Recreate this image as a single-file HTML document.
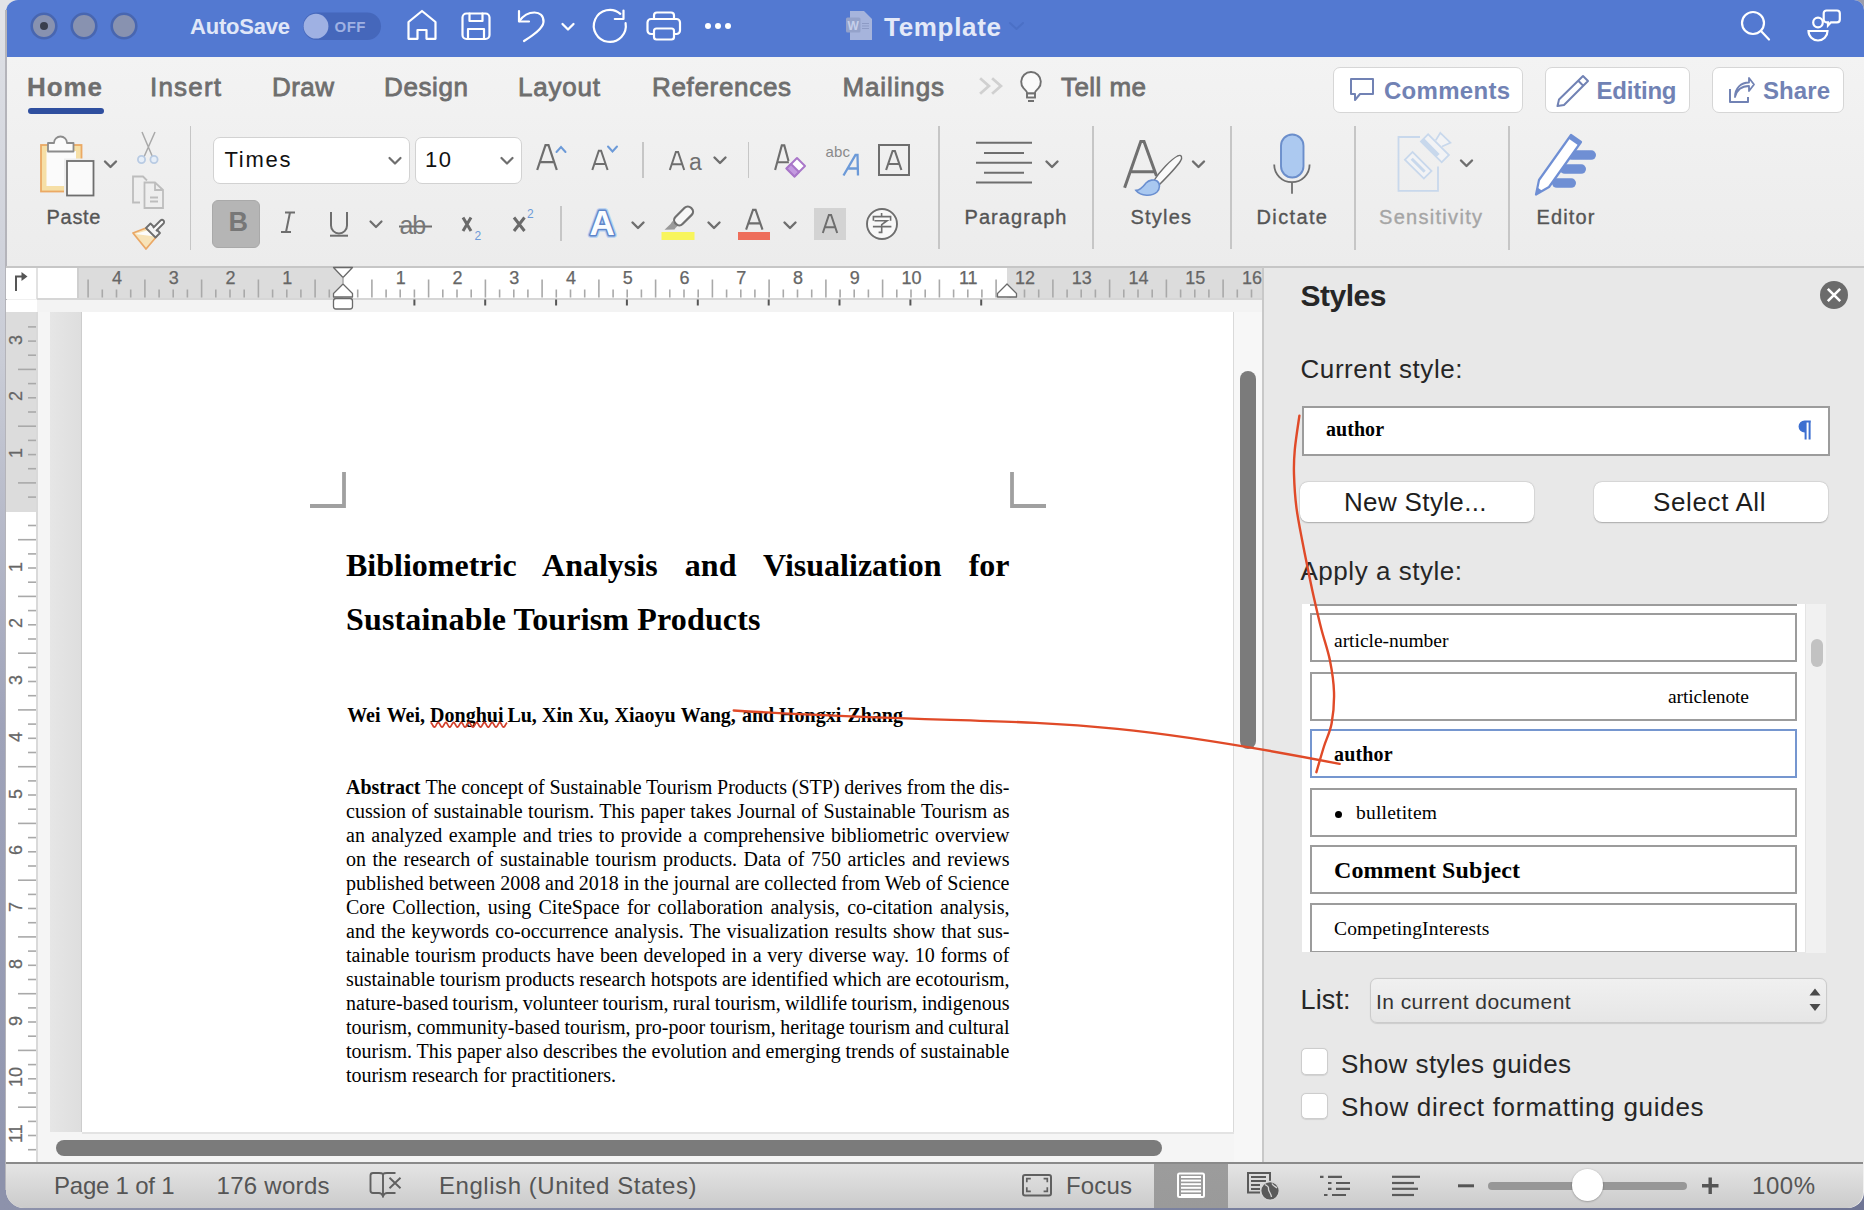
<!DOCTYPE html>
<html><head><meta charset="utf-8">
<style>
*{margin:0;padding:0;box-sizing:border-box}
html,body{width:1864px;height:1210px;overflow:hidden;background:#8f94ab;font-family:"Liberation Sans",sans-serif;position:relative}
.a{position:absolute}
.t{position:absolute;white-space:nowrap;line-height:1}
svg{overflow:visible}
</style></head><body>
<div class="a" style="left:0;top:0;width:6px;height:1210px;background:linear-gradient(#dfe1e6,#c9ccd6 30%,#9fa3b9 60%,#9095ae)"></div>
<div class="a" style="left:0;top:1150px;width:1864px;height:60px;background:linear-gradient(90deg,#8d92ab,#7f86a3 50%,#6f7594)"></div>
<div class="a" style="left:0;top:0;width:30px;height:30px;background:#e2e3e7"></div>
<div class="a" style="left:1834px;top:0;width:30px;height:30px;background:#9a9cab"></div>
<div id="win" class="a" style="left:6px;top:0;width:1858px;height:1208px;border-radius:12px 10px 16px 18px;overflow:hidden;background:#f0f0f0">
<div class="a" style="left:0;top:0;width:1858px;height:57px;background:#5379d1"></div>
<div class="a" style="left:0;top:57px;width:1858px;height:210px;background:linear-gradient(#f3f3f3,#f0f0f0 40%,#ececec)"></div>
</div>
<div class="a" style="left:5px;top:10px;width:1.5px;height:1180px;background:#b4b4ba"></div>
<svg class="a" style="left:0;top:0" width="1864" height="57">
   <g stroke="#4866b0" stroke-width="2.6" fill="#8892b0">
    <circle cx="44" cy="26" r="12.3"/><circle cx="84" cy="26" r="12.3"/><circle cx="124" cy="26" r="12.3"/>
   </g>
   <circle cx="44" cy="26" r="4" fill="#3a3f4e"/>
   <rect x="303" y="12.5" width="78" height="27.5" rx="13.7" fill="#4567bb"/>
   <circle cx="316" cy="26.2" r="12.4" fill="#9fb1e3"/>
   <g fill="none" stroke="#fff" stroke-width="2.2" stroke-linejoin="round" stroke-linecap="round">
    <path d="M408.5 22 L422 11 L435.5 22 V38.8 H426.5 V30 H417.5 V38.8 H408.5 Z"/>
    <rect x="462.5" y="13.5" width="27" height="25.5" rx="4"/>
    <path d="M469.5 13.5 V21 H482.5 V13.5"/><path d="M468 39 V29 H484 V39"/>
    <path d="M519 11 V21.5 H529"/><path d="M519.5 21 C527 10 544 9 543.5 22 C543 29 532 36 524 41"/>
    <path d="M562.5 24 L568 29.5 L573.5 24" stroke-width="2.3"/>
    <path d="M620.3 13.8 A16 16 0 1 0 625.6 23.2"/><path d="M623.5 10.5 V19 H614.8"/>
    <path d="M654 19 V15.5 A3 3 0 0 1 657 12.5 H671 A3 3 0 0 1 674 15.5 V19"/>
    <path d="M653.5 34 H651 A3.5 3.5 0 0 1 647.5 30.5 V22.5 A3.5 3.5 0 0 1 651 19 H676.5 A3.5 3.5 0 0 1 680 22.5 V30.5 A3.5 3.5 0 0 1 676.5 34 H674"/>
    <rect x="654" y="28.5" width="20" height="11" rx="2.5"/>
    <path d="M1010 23 L1016.5 29 L1023 23" stroke="#4b70c6" stroke-width="2"/>
   </g>
   <g fill="#fff"><circle cx="708" cy="26" r="3"/><circle cx="718" cy="26" r="3"/><circle cx="728" cy="26" r="3"/></g>
   <path d="M850 11 H864 L872 19 V40 H850 Z" fill="#a6b4dc"/>
   <rect x="846" y="17.5" width="14.5" height="15" rx="1.5" fill="#94a2ca"/>
   <text x="847.5" y="30" font-family="Liberation Sans" font-size="12" font-weight="bold" fill="#c5cfea">W</text>
   <g stroke="#8d9bc5" stroke-width="1"><path d="M862 23.5 H869 M862 26 H869 M862 28.5 H869"/></g>
   <g fill="none" stroke="#fff" stroke-width="2.2" stroke-linecap="round">
    <circle cx="1753" cy="23" r="11"/><path d="M1761 31 L1769 39.5"/>
    <circle cx="1818" cy="22.5" r="4.8"/>
    <path d="M1808.5 31 H1827.5 A9.5 9.5 0 0 1 1808.5 31 Z"/>
    <path d="M1826.5 10.5 H1837 A2.8 2.8 0 0 1 1839.8 13.3 V19.5 A2.8 2.8 0 0 1 1837 22.3 H1831 L1828 25.5 V22.3 H1826.5 A2.8 2.8 0 0 1 1823.7 19.5 V13.3 A2.8 2.8 0 0 1 1826.5 10.5 Z"/>
   </g>
  </svg>
<div class="t" style="left:190.0px;top:15.6px;font-size:22px;color:#e0e7f8;font-weight:bold;letter-spacing:-0.210px;">AutoSave</div>
<div class="t" style="left:334.5px;top:18.5px;font-size:15px;color:#9fb1e3;font-weight:bold;letter-spacing:0.508px;">OFF</div>
<div class="t" style="left:884.0px;top:14.0px;font-size:26px;color:#e4e9f8;font-weight:bold;letter-spacing:0.688px;">Template</div>
<div class="t" style="left:27.0px;top:74.3px;font-size:26px;color:#6e6e6e;font-weight:bold;letter-spacing:0.922px;-webkit-text-stroke:0.3px #6e6e6e;">Home</div>
<div class="t" style="left:150.0px;top:74.3px;font-size:26px;color:#6e6e6e;letter-spacing:1.200px;-webkit-text-stroke:0.8px #6e6e6e;">Insert</div>
<div class="t" style="left:272.0px;top:74.3px;font-size:26px;color:#6e6e6e;letter-spacing:0.443px;-webkit-text-stroke:0.8px #6e6e6e;">Draw</div>
<div class="t" style="left:384.0px;top:74.3px;font-size:26px;color:#6e6e6e;letter-spacing:0.616px;-webkit-text-stroke:0.8px #6e6e6e;">Design</div>
<div class="t" style="left:518.0px;top:74.3px;font-size:26px;color:#6e6e6e;letter-spacing:0.794px;-webkit-text-stroke:0.8px #6e6e6e;">Layout</div>
<div class="t" style="left:652.0px;top:74.3px;font-size:26px;color:#6e6e6e;letter-spacing:0.675px;-webkit-text-stroke:0.8px #6e6e6e;">References</div>
<div class="t" style="left:842.5px;top:74.3px;font-size:26px;color:#6e6e6e;letter-spacing:0.877px;-webkit-text-stroke:0.8px #6e6e6e;">Mailings</div>
<div class="t" style="left:1061.0px;top:74.3px;font-size:26px;color:#6e6e6e;letter-spacing:0.443px;-webkit-text-stroke:0.8px #6e6e6e;">Tell me</div>
<div class="a" style="left:28px;top:108px;width:76px;height:6px;background:#2f4f9f;border-radius:3px"></div>
<svg class="a" style="left:970px;top:70px" width="80" height="40">
   <g fill="none" stroke="#d0d0d0" stroke-width="2.8" stroke-linejoin="miter"><path d="M10.1 8.3 L18.9 16 L10.1 23.8 M22.1 8.3 L30.9 16 L22.1 23.8"/></g>
   <g stroke="#707070" stroke-width="1.9"><path d="M57.3 23.5 C57.2 21.5 55.6 20.2 53.7 18.4 A9.8 9.8 0 1 1 68.3 18.4 C66.4 20.2 64.8 21.5 64.7 23.5 Z" fill="#fafafa"/><rect x="57" y="23.5" width="8" height="4" fill="#fafafa"/><path d="M58 31 H64" stroke-width="2"/></g>
  </svg>
<div class="a" style="left:1333px;top:67px;width:190px;height:46px;background:#fff;border:1.5px solid #d6d6d6;border-radius:7px"></div>
<div class="a" style="left:1545px;top:67px;width:145px;height:46px;background:#fff;border:1.5px solid #d6d6d6;border-radius:7px"></div>
<div class="a" style="left:1712px;top:67px;width:131.5px;height:46px;background:#fff;border:1.5px solid #d6d6d6;border-radius:7px"></div>
<div class="t" style="left:1384.0px;top:79.1px;font-size:24px;color:#7182b4;font-weight:bold;letter-spacing:0.283px;">Comments</div>
<div class="t" style="left:1596.5px;top:79.1px;font-size:24px;color:#7182b4;font-weight:bold;letter-spacing:-0.221px;">Editing</div>
<div class="t" style="left:1763.0px;top:79.1px;font-size:24px;color:#7182b4;font-weight:bold;letter-spacing:0.074px;">Share</div>
<svg class="a" style="left:0;top:60px" width="1864" height="60">
   <g fill="none" stroke="#7182b4" stroke-width="2" stroke-linejoin="round">
    <path d="M1351 19 H1373 V34 H1360 L1355 40 V34 H1351 Z"/>
    <path d="M1583 16 L1588 21 L1564 45 L1557.5 46 L1559 39.5 Z M1578.5 21 L1583.5 26"/>
    <path d="M1730 29 V42 H1748 V37"/>
    <path d="M1735 37 C1737 29 1742 26 1749 26 V31 L1754 24.5 L1749 18 V22.5 C1741 22.5 1735 28 1735 37 Z" stroke-width="1.8"/>
   </g>
  </svg>
<div class="a" style="left:189.75px;top:126px;width:1.5px;height:124px;background:#c6c6c6;"></div>
<div class="a" style="left:938.25px;top:126px;width:1.5px;height:123px;background:#c6c6c6;"></div>
<div class="a" style="left:1092.25px;top:126px;width:1.5px;height:123px;background:#c6c6c6;"></div>
<div class="a" style="left:1230.25px;top:126px;width:1.5px;height:123px;background:#c6c6c6;"></div>
<div class="a" style="left:1354.25px;top:126px;width:1.5px;height:123.5px;background:#c6c6c6;"></div>
<div class="a" style="left:1508.25px;top:126px;width:1.5px;height:123.5px;background:#c6c6c6;"></div>
<div class="a" style="left:642.05px;top:142px;width:1.5px;height:36px;background:#c6c6c6;"></div>
<div class="a" style="left:747.95px;top:142px;width:1.5px;height:36px;background:#c6c6c6;"></div>
<div class="a" style="left:560.25px;top:206px;width:1.5px;height:35px;background:#c6c6c6;"></div>
<div class="a" style="left:212.5px;top:136.5px;width:197px;height:47px;background:#fff;border:1px solid #d2d2d2;border-radius:7px"></div>
<div class="a" style="left:414.5px;top:136.5px;width:107px;height:47px;background:#fff;border:1px solid #d2d2d2;border-radius:7px"></div>
<div class="t" style="left:224.5px;top:148.9px;font-size:22px;color:#111;letter-spacing:1.730px;">Times</div>
<div class="t" style="left:425.0px;top:148.9px;font-size:22px;color:#111;letter-spacing:1.531px;">10</div>
<div class="a" style="left:212px;top:200px;width:48px;height:48px;background:#b5b5b5;border:1px solid #a9a9a9;border-radius:6px"></div>
<div class="t" style="left:228.5px;top:209.1px;font-size:27px;color:#777;font-weight:bold;letter-spacing:-3.500px;">B</div>
<div class="t" style="left:46.5px;top:206.9px;font-size:20px;color:#555;letter-spacing:0.711px;-webkit-text-stroke:0.35px #555;">Paste</div>
<div class="t" style="left:964.5px;top:207.1px;font-size:20px;color:#555;letter-spacing:1.074px;-webkit-text-stroke:0.35px #555;">Paragraph</div>
<div class="t" style="left:1130.5px;top:207.1px;font-size:20px;color:#555;letter-spacing:1.206px;-webkit-text-stroke:0.35px #555;">Styles</div>
<div class="t" style="left:1256.5px;top:206.8px;font-size:20px;color:#555;letter-spacing:1.375px;-webkit-text-stroke:0.35px #555;">Dictate</div>
<div class="t" style="left:1379.0px;top:206.8px;font-size:20px;color:#a5a5a5;letter-spacing:1.297px;-webkit-text-stroke:0.35px #a5a5a5;">Sensitivity</div>
<div class="t" style="left:1536.5px;top:206.8px;font-size:20px;color:#555;letter-spacing:1.150px;-webkit-text-stroke:0.35px #555;">Editor</div>
<svg class="a" style="left:0;top:0" width="1864" height="270">
<rect x="41" y="145" width="40.5" height="46.5" fill="#f6dfa6" stroke="#eba964" stroke-width="1.8"/>
<rect x="46.5" y="151" width="29.5" height="35" fill="#fbfbfb"/>
<path d="M48 151.5 V143 H54 A6.5 6.5 0 0 1 67 143 H73.5 V151.5 Z" fill="#fbfbfb" stroke="#8c8c8c" stroke-width="1.8" stroke-linejoin="round"/>
<rect x="65" y="159.5" width="29" height="37" fill="#fff" stroke="#eeeeee" stroke-width="2"/>
<rect x="67" y="161" width="26.5" height="34.5" fill="#fafafa" stroke="#6e6e6e" stroke-width="1.8"/>
<path d="M105 161.5 L110.5 167.0 L116 161.5" fill="none" stroke="#6e6e6e" stroke-width="2.4" stroke-linecap="round" stroke-linejoin="round"/><g fill="none" stroke="#a9a9a9" stroke-width="1.5"><path d="M142 132 L153 158 M155 132 L143.5 158"/></g>
<g fill="#e6eef8" stroke="#b9cbe3" stroke-width="1.8"><circle cx="141.5" cy="159.5" r="3.6"/><circle cx="154" cy="159.5" r="3.6"/></g>
<g fill="none" stroke="#bdbdbd" stroke-width="1.8" stroke-linejoin="miter">
<path d="M140 202.5 H133 V176.5 H143 L147 180.5"/>
<path d="M144.5 182.5 H155 L163 190 V208 H144.5 Z M155 182.5 V190 H163"/>
<path d="M150 197.5 H158 M150 201.5 H158"/></g>
<path d="M133 233 L146 228 L157 236 L146 249 Z" fill="#f7e3b8" stroke="#eaa866" stroke-width="1.8" stroke-linejoin="round"/>
<path d="M135 234 L147 230.5 L155.5 236.5" fill="#fcfcfc" stroke="none"/>
<path d="M146 228 L150.5 223.5 L160 233 L155.5 237.5 Z" fill="#f4f4f4" stroke="#6e6e6e" stroke-width="1.8" stroke-linejoin="round"/>
<path d="M153 228 L160.5 220.5 A2 2 0 0 1 163.5 223.5 L156 231" fill="#fafafa" stroke="#6e6e6e" stroke-width="1.8"/>
<path d="M389.5 158 L395.0 163.5 L400.5 158" fill="none" stroke="#6e6e6e" stroke-width="2.2" stroke-linecap="round" stroke-linejoin="round"/><path d="M501.5 158 L507.0 163.5 L512.5 158" fill="none" stroke="#6e6e6e" stroke-width="2.2" stroke-linecap="round" stroke-linejoin="round"/><g fill="none" stroke="#6e6e6e" stroke-width="2">
<path d="M285 212.5 H295 M281 232 H291 M290 212.5 L286 232"/>
<path d="M331 212 V225.5 A8 8 0 0 0 347 225.5 V212" />
<path d="M330 235.7 H348"/>
<path d="M399 226.5 H432"/>
</g>
<path d="M370.5 221.5 L376.0 227.0 L381.5 221.5" fill="none" stroke="#6e6e6e" stroke-width="2.2" stroke-linecap="round" stroke-linejoin="round"/><path d="M463 217.5 L471 231 M471 217.5 L463 231 M514 217.5 L524.5 231 M524.5 217.5 L514 231" stroke="#6a6a6a" stroke-width="3" fill="none"/></svg>
<div class="t" style="left:399.5px;top:212.8px;font-size:25px;color:#777;letter-spacing:-1.2px">ab</div>
<div class="t" style="left:474.5px;top:229.8px;font-size:12px;color:#6c9ad8;letter-spacing:0.328px;">2</div>
<div class="t" style="left:527.0px;top:208.4px;font-size:12px;color:#6c9ad8;letter-spacing:0.328px;">2</div>
<div class="t" style="left:689.0px;top:150.5px;font-size:23px;color:#707070;letter-spacing:-1.797px;">a</div>
<div class="t" style="left:825.5px;top:143.8px;font-size:15px;color:#8a8a8a;letter-spacing:0.156px;">abc</div>
<div class="a" style="left:877.5px;top:144px;width:32.5px;height:31.5px;background:transparent;border:2px solid #6e6e6e"></div>
<svg class="a" style="left:0;top:0" width="1864" height="270">
<path d="M556.5 152 L561 147 L565.5 152" fill="none" stroke="#6c9ad8" stroke-width="2" stroke-linecap="round"/>
<path d="M608 146.5 L612.5 151.5 L617 146.5" fill="none" stroke="#6c9ad8" stroke-width="2" stroke-linecap="round"/>
<path d="M714.5 157.5 L720.0 163.0 L725.5 157.5" fill="none" stroke="#6e6e6e" stroke-width="2.4" stroke-linecap="round" stroke-linejoin="round"/><path d="M786.5 168.5 L797 158 L805 166 L794.5 176.5 Z" fill="#fff" stroke="#a977c9" stroke-width="2" stroke-linejoin="round"/><path d="M786.5 168.5 L791 164 L799 172 L794.5 176.5 Z" fill="#c49be0" stroke="#a977c9" stroke-width="2" stroke-linejoin="round"/>
<path d="M843.5 175.5 L855.5 155 H857.5 L858 175.5 M847.5 168.5 H857.5" fill="none" stroke="#6c9ad8" stroke-width="2.3"/>
<path d="M632.5 222.5 L638.0 228.0 L643.5 222.5" fill="none" stroke="#6e6e6e" stroke-width="2.4" stroke-linecap="round" stroke-linejoin="round"/><path d="M708.5 222.5 L714.0 228.0 L719.5 222.5" fill="none" stroke="#6e6e6e" stroke-width="2.4" stroke-linecap="round" stroke-linejoin="round"/><path d="M784.5 222.5 L790.0 228.0 L795.5 222.5" fill="none" stroke="#6e6e6e" stroke-width="2.4" stroke-linecap="round" stroke-linejoin="round"/><rect x="661.5" y="232" width="33" height="8" fill="#f8f55c"/>
<path d="M664.5 229.8 L670.5 224 L672.5 221 L677.5 226 L675.5 228 L674.5 229.5 Z" fill="#9a9a9a"/><g transform="rotate(45 682.5 217)"><rect x="677.5" y="204.5" width="10" height="22" rx="4.5" fill="#f7f7f7" stroke="#707070" stroke-width="2.2"/></g>
<rect x="738" y="232" width="32" height="8" fill="#ee6e5b"/>
<rect x="814" y="208" width="32" height="32" fill="#d3d3d3"/>
<circle cx="882" cy="224" r="15" fill="#f8f8f8" stroke="#6e6e6e" stroke-width="1.9"/><path d="M881.6 213 V216.4 M873.4 220.8 V216.6 H890.6 V220.8 M874.5 220.7 H887.1 L881.7 224.7 V232.4 H878.6 M872.9 226.6 H891.4" fill="none" stroke="#6e6e6e" stroke-width="1.6"/>
<path d="M537.2 170.0 L545.5 145.1 H548.5 L556.8 170.0 M539.8 162.2 H554.2" fill="none" stroke="#6e6e6e" stroke-width="2.2" stroke-linejoin="miter"/><path d="M592.3 170.0 L598.8 150.8 H601.1 L607.6 170.0 M594.3 163.9 H605.6" fill="none" stroke="#6e6e6e" stroke-width="2.0" stroke-linejoin="miter"/><path d="M669.8 170.0 L675.9 152.0 H678.1 L684.2 170.0 M671.7 164.3 H682.3" fill="none" stroke="#6e6e6e" stroke-width="2.0" stroke-linejoin="miter"/><path d="M775.1 170.0 L781.8 145.4 H784.3 L788.5 161.0 M777.2 162.3 H788.9" fill="none" stroke="#6e6e6e" stroke-width="2.1" stroke-linejoin="miter"/><path d="M886.1 170.0 L892.6 151.0 H894.9 L901.4 170.0 M888.2 164.0 H899.3" fill="none" stroke="#6e6e6e" stroke-width="2.1" stroke-linejoin="miter"/><path d="M746.1 229.7 L753.0 209.9 H755.6 L762.5 229.7 M748.3 223.4 H760.3" fill="none" stroke="#6e6e6e" stroke-width="2.1" stroke-linejoin="miter"/><path d="M822.8 233.0 L828.9 215.0 H831.1 L837.2 233.0 M824.7 227.3 H835.3" fill="none" stroke="#6e6e6e" stroke-width="2.0" stroke-linejoin="miter"/></svg>
<svg class="a" style="left:0;top:0" width="1864" height="270"><g font-family="Liberation Sans" font-weight="bold" font-size="35" stroke-linejoin="round"><text x="589.5" y="235" fill="#fff" stroke="#b4cff1" stroke-width="5.5">A</text><text x="589.5" y="235" fill="#fff" stroke="#5f86c9" stroke-width="3">A</text><text x="589.5" y="235" fill="#fbfdff" stroke="none">A</text></g></svg>
<svg class="a" style="left:0;top:0" width="1864" height="270">
<path d="M976 142.7 H1032" stroke="#6e6e6e" stroke-width="2"/><path d="M984 152.9 H1024" stroke="#6e6e6e" stroke-width="2"/><path d="M976 162.8 H1032" stroke="#6e6e6e" stroke-width="2"/><path d="M984 172.8 H1024" stroke="#6e6e6e" stroke-width="2"/><path d="M976 182.6 H1032" stroke="#6e6e6e" stroke-width="2"/><path d="M1046.5 161.5 L1052.0 167.0 L1057.5 161.5" fill="none" stroke="#6e6e6e" stroke-width="2.4" stroke-linecap="round" stroke-linejoin="round"/><path d="M1193 161.5 L1198.5 167.0 L1204 161.5" fill="none" stroke="#6e6e6e" stroke-width="2.4" stroke-linecap="round" stroke-linejoin="round"/><path d="M1461 160.5 L1466.5 166.0 L1472 160.5" fill="none" stroke="#6e6e6e" stroke-width="2.4" stroke-linecap="round" stroke-linejoin="round"/><path d="M1124.6 187.8 L1140.8 141.5 H1144 L1156.5 176 M1131.5 171.8 H1155.5" fill="none" stroke="#707070" stroke-width="3"/>
<path d="M1154 180.5 C1160 171 1171 159.5 1177.5 156 C1182 154 1182.5 157.5 1180.5 161 C1176 168 1166 178 1159.5 184.5 Z" fill="#fafafa" stroke="#6e6e6e" stroke-width="1.4"/>
<path d="M1136 190.4 C1141 190 1143.5 186 1146 183 C1149 180 1154 179 1157 181 C1160.5 183.5 1160 189 1157 192 C1152 196.5 1141 196.5 1136 190.4 Z" fill="#a9c8f0" stroke="#6a8fd0" stroke-width="1.6"/>
<rect x="1281" y="134.5" width="22.5" height="43" rx="11.25" fill="#acc9f0" stroke="#6b8ecb" stroke-width="1.9"/>
<path d="M1274.2 164.5 A17.7 17.7 0 0 0 1309.6 164.5 M1292 182.2 V193.8" fill="none" stroke="#6e6e6e" stroke-width="1.8"/>
<path d="M1420 137 H1398.5 V190.8 H1438 V166.5" fill="none" stroke="#c8d8ec" stroke-width="1.8"/>
<g transform="translate(1418.2 165.3) rotate(45)"><rect x="-13.4" y="-5.4" width="26.8" height="10.8" fill="#f2f3f5" stroke="#c8d8ec" stroke-width="1.8"/><rect x="-9.2" y="-1.5" width="18.4" height="3" fill="#c8d8ec"/></g>
<path d="M1435.7 140.4 L1440.3 132.9 L1450.4 142.7 L1442 146.5" fill="#f2f3f5" stroke="#c8d8ec" stroke-width="1.8" stroke-linejoin="miter"/>
<g transform="translate(1434.9 148.3) rotate(45)"><rect x="-14.7" y="-5.1" width="29.4" height="10.2" fill="#f2f3f5" stroke="#c8d8ec" stroke-width="1.8"/><rect x="-14.7" y="0.6" width="22" height="4.5" fill="#c8d8ec"/></g>
<g fill="#6f8fd4"><rect x="1567" y="150.3" width="29" height="9.5" rx="4.75"/><rect x="1560" y="164.3" width="26" height="9.5" rx="4.75"/><rect x="1552" y="178.3" width="24" height="9.5" rx="4.75"/></g>
<path d="M1536 194.5 L1539 180 L1571 135 L1581 142 L1549 187 Z" fill="#fff" stroke="#6f8fd4" stroke-width="2.2" stroke-linejoin="round"/>
<path d="M1568.5 138.5 L1571 135 L1581 142 L1578.5 145.5 Z" fill="#6f8fd4"/><path d="M1536 194.5 L1537.5 187.5 L1542.5 191 Z" fill="#6f8fd4"/>
</svg>
<div class="a" style="left:6px;top:266px;width:1858px;height:1.5px;background:#c6c6c6;"></div>
<div class="a" style="left:6px;top:267.5px;width:1257px;height:31.5px;background:#ffffff;"></div>
<div class="a" style="left:36px;top:267.5px;width:1.5px;height:31.5px;background:#e2e2e2;"></div>
<div class="a" style="left:77px;top:267.5px;width:266px;height:30px;background:#dcdcdc;"></div>
<div class="a" style="left:1007px;top:267.5px;width:255.5px;height:30px;background:#dcdcdc;"></div>
<div class="a" style="left:77px;top:267.5px;width:1.5px;height:30px;background:#cfcfcf;"></div>
<div class="a" style="left:37px;top:297.5px;width:1226px;height:2px;background:#d6d6d6;"></div>
<div class="a" style="left:6px;top:299.5px;width:31px;height:12.5px;background:#ffffff;"></div>
<div class="a" style="left:37px;top:299.5px;width:1226px;height:12.5px;background:#f3f3f3;"></div>
<div class="a" style="left:6px;top:312px;width:30px;height:850px;background:#ffffff;"></div>
<div class="a" style="left:6px;top:312px;width:30px;height:199.5px;background:#dcdcdc;"></div>
<div class="a" style="left:36px;top:312px;width:1.5px;height:850px;background:#d9d9d9;"></div>
<div class="a" style="left:37.5px;top:312px;width:1225.5px;height:850px;background:#f5f5f5;"></div>
<div class="a" style="left:50px;top:312px;width:31px;height:820px;background:linear-gradient(90deg,#e6e6e6,#dedede)"></div>
<div class="a" style="left:81px;top:312px;width:1.5px;height:820px;background:#cdcdcd;"></div>
<div class="a" style="left:82px;top:312px;width:1150.5px;height:820px;background:#ffffff;"></div>
<div class="a" style="left:1232.5px;top:312px;width:1.5px;height:821.5px;background:#dadada;"></div>
<div class="a" style="left:82px;top:1132px;width:1152px;height:1.5px;background:#e3e3e3;"></div>
<div class="a" style="left:1234px;top:312px;width:28.5px;height:850px;background:#f7f7f7;"></div>
<div class="a" style="left:1262px;top:267px;width:2px;height:895px;background:#c8c8c8;"></div>
<div class="a" style="left:1240px;top:371px;width:16px;height:378px;background:#7b7b7b;border-radius:8px"></div>
<div class="a" style="left:56px;top:1140px;width:1106px;height:16px;background:#7b7b7b;border-radius:8px"></div>
<svg class="a" style="left:0;top:0" width="1864" height="1210">
<g stroke="#a9a9a9" stroke-width="1.6"><path d="M88.1 279.5 V297.5"/><path d="M102.3 289.5 V297.5"/><path d="M116.5 289.5 V297.5"/><path d="M130.7 289.5 V297.5"/><path d="M144.9 279.5 V297.5"/><path d="M159.1 289.5 V297.5"/><path d="M173.2 289.5 V297.5"/><path d="M187.4 289.5 V297.5"/><path d="M201.6 279.5 V297.5"/><path d="M215.8 289.5 V297.5"/><path d="M230.0 289.5 V297.5"/><path d="M244.2 289.5 V297.5"/><path d="M258.4 279.5 V297.5"/><path d="M272.6 289.5 V297.5"/><path d="M286.8 289.5 V297.5"/><path d="M300.9 289.5 V297.5"/><path d="M315.1 279.5 V297.5"/><path d="M329.3 289.5 V297.5"/><path d="M357.7 289.5 V297.5"/><path d="M371.9 279.5 V297.5"/><path d="M386.1 289.5 V297.5"/><path d="M400.2 289.5 V297.5"/><path d="M414.4 289.5 V297.5"/><path d="M428.6 279.5 V297.5"/><path d="M442.8 289.5 V297.5"/><path d="M457.0 289.5 V297.5"/><path d="M471.2 289.5 V297.5"/><path d="M485.4 279.5 V297.5"/><path d="M499.6 289.5 V297.5"/><path d="M513.8 289.5 V297.5"/><path d="M527.9 289.5 V297.5"/><path d="M542.1 279.5 V297.5"/><path d="M556.3 289.5 V297.5"/><path d="M570.5 289.5 V297.5"/><path d="M584.7 289.5 V297.5"/><path d="M598.9 279.5 V297.5"/><path d="M613.1 289.5 V297.5"/><path d="M627.2 289.5 V297.5"/><path d="M641.4 289.5 V297.5"/><path d="M655.6 279.5 V297.5"/><path d="M669.8 289.5 V297.5"/><path d="M684.0 289.5 V297.5"/><path d="M698.2 289.5 V297.5"/><path d="M712.4 279.5 V297.5"/><path d="M726.6 289.5 V297.5"/><path d="M740.8 289.5 V297.5"/><path d="M754.9 289.5 V297.5"/><path d="M769.1 279.5 V297.5"/><path d="M783.3 289.5 V297.5"/><path d="M797.5 289.5 V297.5"/><path d="M811.7 289.5 V297.5"/><path d="M825.9 279.5 V297.5"/><path d="M840.1 289.5 V297.5"/><path d="M854.2 289.5 V297.5"/><path d="M868.4 289.5 V297.5"/><path d="M882.6 279.5 V297.5"/><path d="M896.8 289.5 V297.5"/><path d="M911.0 289.5 V297.5"/><path d="M925.2 289.5 V297.5"/><path d="M939.4 279.5 V297.5"/><path d="M953.6 289.5 V297.5"/><path d="M967.8 289.5 V297.5"/><path d="M981.9 289.5 V297.5"/><path d="M996.1 279.5 V297.5"/><path d="M1010.3 289.5 V297.5"/><path d="M1024.5 289.5 V297.5"/><path d="M1038.7 289.5 V297.5"/><path d="M1052.9 279.5 V297.5"/><path d="M1067.1 289.5 V297.5"/><path d="M1081.2 289.5 V297.5"/><path d="M1095.4 289.5 V297.5"/><path d="M1109.6 279.5 V297.5"/><path d="M1123.8 289.5 V297.5"/><path d="M1138.0 289.5 V297.5"/><path d="M1152.2 289.5 V297.5"/><path d="M1166.4 279.5 V297.5"/><path d="M1180.6 289.5 V297.5"/><path d="M1194.8 289.5 V297.5"/><path d="M1208.9 289.5 V297.5"/><path d="M1223.1 279.5 V297.5"/><path d="M1237.3 289.5 V297.5"/><path d="M1251.5 289.5 V297.5"/></g>
<g stroke="#a9a9a9" stroke-width="1.6"><path d="M28 326.9 H36"/><path d="M28 341.1 H36"/><path d="M28 355.2 H36"/><path d="M18 369.4 H36"/><path d="M28 383.6 H36"/><path d="M28 397.8 H36"/><path d="M28 412.0 H36"/><path d="M18 426.2 H36"/><path d="M28 440.4 H36"/><path d="M28 454.6 H36"/><path d="M28 468.7 H36"/><path d="M18 482.9 H36"/><path d="M28 497.1 H36"/><path d="M28 525.5 H36"/><path d="M18 539.7 H36"/><path d="M28 553.9 H36"/><path d="M28 568.0 H36"/><path d="M28 582.2 H36"/><path d="M18 596.4 H36"/><path d="M28 610.6 H36"/><path d="M28 624.8 H36"/><path d="M28 639.0 H36"/><path d="M18 653.2 H36"/><path d="M28 667.4 H36"/><path d="M28 681.5 H36"/><path d="M28 695.7 H36"/><path d="M18 709.9 H36"/><path d="M28 724.1 H36"/><path d="M28 738.3 H36"/><path d="M28 752.5 H36"/><path d="M18 766.7 H36"/><path d="M28 780.9 H36"/><path d="M28 795.0 H36"/><path d="M28 809.2 H36"/><path d="M18 823.4 H36"/><path d="M28 837.6 H36"/><path d="M28 851.8 H36"/><path d="M28 866.0 H36"/><path d="M18 880.2 H36"/><path d="M28 894.4 H36"/><path d="M28 908.5 H36"/><path d="M28 922.7 H36"/><path d="M18 936.9 H36"/><path d="M28 951.1 H36"/><path d="M28 965.3 H36"/><path d="M28 979.5 H36"/><path d="M18 993.7 H36"/><path d="M28 1007.9 H36"/><path d="M28 1022.0 H36"/><path d="M28 1036.2 H36"/><path d="M18 1050.4 H36"/><path d="M28 1064.6 H36"/><path d="M28 1078.8 H36"/><path d="M28 1093.0 H36"/><path d="M18 1107.2 H36"/><path d="M28 1121.4 H36"/><path d="M28 1135.5 H36"/><path d="M28 1149.7 H36"/></g>
<g stroke="#555" stroke-width="2"><path d="M414.4 299.5 V305.5"/><path d="M485.2 299.5 V305.5"/><path d="M556.1 299.5 V305.5"/><path d="M626.9 299.5 V305.5"/><path d="M697.8 299.5 V305.5"/><path d="M768.7 299.5 V305.5"/><path d="M839.5 299.5 V305.5"/><path d="M910.4 299.5 V305.5"/><path d="M981.2 299.5 V305.5"/></g>
<g fill="#fff" stroke="#6a6a6a" stroke-width="1.3" stroke-linejoin="round"><path d="M333.5 267.5 L352.5 267.5 L343 277.5 Z"/><path d="M343 284 L352.5 293.5 V297 H333.5 V293.5 Z"/><rect x="333.5" y="298.5" width="19" height="10.5" rx="2.5"/><path d="M1007 284 L1016.5 293.5 V297 H997.5 V293.5 Z"/></g>
<path d="M343 277.5 V284" stroke="#a9a9a9" stroke-width="1.5"/><path d="M16 291 V276.5 H22" fill="none" stroke="#555" stroke-width="2"/><path d="M21.5 272 L27.5 276.5 L21.5 281 Z" fill="#555"/><path d="M310 506 H344 V472" fill="none" stroke="#a0a0a0" stroke-width="3.8"/><path d="M1012 472 V506 H1046" fill="none" stroke="#a0a0a0" stroke-width="3.8"/></svg>
<div class="t" style="left:112.0px;top:268.6px;font-size:18px;color:#666;-webkit-text-stroke:0.25px #666;">4</div>
<div class="t" style="left:168.7px;top:268.6px;font-size:18px;color:#666;-webkit-text-stroke:0.25px #666;">3</div>
<div class="t" style="left:225.5px;top:268.6px;font-size:18px;color:#666;-webkit-text-stroke:0.25px #666;">2</div>
<div class="t" style="left:282.2px;top:268.6px;font-size:18px;color:#666;-webkit-text-stroke:0.25px #666;">1</div>
<div class="t" style="left:395.7px;top:268.6px;font-size:18px;color:#666;-webkit-text-stroke:0.25px #666;">1</div>
<div class="t" style="left:452.5px;top:268.6px;font-size:18px;color:#666;-webkit-text-stroke:0.25px #666;">2</div>
<div class="t" style="left:509.2px;top:268.6px;font-size:18px;color:#666;-webkit-text-stroke:0.25px #666;">3</div>
<div class="t" style="left:566.0px;top:268.6px;font-size:18px;color:#666;-webkit-text-stroke:0.25px #666;">4</div>
<div class="t" style="left:622.7px;top:268.6px;font-size:18px;color:#666;-webkit-text-stroke:0.25px #666;">5</div>
<div class="t" style="left:679.5px;top:268.6px;font-size:18px;color:#666;-webkit-text-stroke:0.25px #666;">6</div>
<div class="t" style="left:736.2px;top:268.6px;font-size:18px;color:#666;-webkit-text-stroke:0.25px #666;">7</div>
<div class="t" style="left:793.0px;top:268.6px;font-size:18px;color:#666;-webkit-text-stroke:0.25px #666;">8</div>
<div class="t" style="left:849.7px;top:268.6px;font-size:18px;color:#666;-webkit-text-stroke:0.25px #666;">9</div>
<div class="t" style="left:901.5px;top:268.6px;font-size:18px;color:#666;-webkit-text-stroke:0.25px #666;">10</div>
<div class="t" style="left:958.9px;top:268.6px;font-size:18px;color:#666;-webkit-text-stroke:0.25px #666;">11</div>
<div class="t" style="left:1015.0px;top:268.6px;font-size:18px;color:#666;-webkit-text-stroke:0.25px #666;">12</div>
<div class="t" style="left:1071.7px;top:268.6px;font-size:18px;color:#666;-webkit-text-stroke:0.25px #666;">13</div>
<div class="t" style="left:1128.5px;top:268.6px;font-size:18px;color:#666;-webkit-text-stroke:0.25px #666;">14</div>
<div class="t" style="left:1185.2px;top:268.6px;font-size:18px;color:#666;-webkit-text-stroke:0.25px #666;">15</div>
<div class="t" style="left:1242.0px;top:268.6px;font-size:18px;color:#666;-webkit-text-stroke:0.25px #666;">16</div>
<div class="t" style="left:7.0px;top:344.6px;font-size:18px;color:#666;-webkit-text-stroke:0.25px #666;transform-origin:0 0;transform:rotate(-90deg)">3</div>
<div class="t" style="left:7.0px;top:401.3px;font-size:18px;color:#666;-webkit-text-stroke:0.25px #666;transform-origin:0 0;transform:rotate(-90deg)">2</div>
<div class="t" style="left:7.0px;top:458.1px;font-size:18px;color:#666;-webkit-text-stroke:0.25px #666;transform-origin:0 0;transform:rotate(-90deg)">1</div>
<div class="t" style="left:7.0px;top:571.6px;font-size:18px;color:#666;-webkit-text-stroke:0.25px #666;transform-origin:0 0;transform:rotate(-90deg)">1</div>
<div class="t" style="left:7.0px;top:628.3px;font-size:18px;color:#666;-webkit-text-stroke:0.25px #666;transform-origin:0 0;transform:rotate(-90deg)">2</div>
<div class="t" style="left:7.0px;top:685.1px;font-size:18px;color:#666;-webkit-text-stroke:0.25px #666;transform-origin:0 0;transform:rotate(-90deg)">3</div>
<div class="t" style="left:7.0px;top:741.8px;font-size:18px;color:#666;-webkit-text-stroke:0.25px #666;transform-origin:0 0;transform:rotate(-90deg)">4</div>
<div class="t" style="left:7.0px;top:798.6px;font-size:18px;color:#666;-webkit-text-stroke:0.25px #666;transform-origin:0 0;transform:rotate(-90deg)">5</div>
<div class="t" style="left:7.0px;top:855.3px;font-size:18px;color:#666;-webkit-text-stroke:0.25px #666;transform-origin:0 0;transform:rotate(-90deg)">6</div>
<div class="t" style="left:7.0px;top:912.1px;font-size:18px;color:#666;-webkit-text-stroke:0.25px #666;transform-origin:0 0;transform:rotate(-90deg)">7</div>
<div class="t" style="left:7.0px;top:968.8px;font-size:18px;color:#666;-webkit-text-stroke:0.25px #666;transform-origin:0 0;transform:rotate(-90deg)">8</div>
<div class="t" style="left:7.0px;top:1025.6px;font-size:18px;color:#666;-webkit-text-stroke:0.25px #666;transform-origin:0 0;transform:rotate(-90deg)">9</div>
<div class="t" style="left:7.0px;top:1087.3px;font-size:18px;color:#666;-webkit-text-stroke:0.25px #666;transform-origin:0 0;transform:rotate(-90deg)">10</div>
<div class="t" style="left:7.0px;top:1143.4px;font-size:18px;color:#666;-webkit-text-stroke:0.25px #666;transform-origin:0 0;transform:rotate(-90deg)">11</div>
<div class="t" style="left:346.0px;top:549.4px;font-size:32px;color:#000;font-weight:bold;font-family:'Liberation Serif',serif;word-spacing:19.195px;">Bibliometric Analysis and Visualization for</div>
<div class="t" style="left:346.0px;top:603.2px;font-size:32px;color:#000;font-weight:bold;font-family:'Liberation Serif',serif;letter-spacing:0.160px;">Sustainable Tourism Products</div>
<div class="t" style="left:347.2px;top:704.9px;font-size:20px;color:#000;font-weight:bold;font-family:'Liberation Serif',serif;">Wei</div>
<div class="t" style="left:386.7px;top:704.9px;font-size:20px;color:#000;font-weight:bold;font-family:'Liberation Serif',serif;">Wei,</div>
<div class="t" style="left:430.1px;top:704.9px;font-size:20px;color:#000;font-weight:bold;font-family:'Liberation Serif',serif;">Donghui</div>
<div class="t" style="left:507.4px;top:704.9px;font-size:20px;color:#000;font-weight:bold;font-family:'Liberation Serif',serif;">Lu,</div>
<div class="t" style="left:542.0px;top:704.9px;font-size:20px;color:#000;font-weight:bold;font-family:'Liberation Serif',serif;">Xin</div>
<div class="t" style="left:578.2px;top:704.9px;font-size:20px;color:#000;font-weight:bold;font-family:'Liberation Serif',serif;">Xu,</div>
<div class="t" style="left:614.5px;top:704.9px;font-size:20px;color:#000;font-weight:bold;font-family:'Liberation Serif',serif;">Xiaoyu</div>
<div class="t" style="left:680.8px;top:704.9px;font-size:20px;color:#000;font-weight:bold;font-family:'Liberation Serif',serif;">Wang,</div>
<div class="t" style="left:742.0px;top:704.9px;font-size:20px;color:#000;font-weight:bold;font-family:'Liberation Serif',serif;">and</div>
<div class="t" style="left:779.0px;top:704.9px;font-size:20px;color:#000;font-weight:bold;font-family:'Liberation Serif',serif;">Hongxi</div>
<div class="t" style="left:847.4px;top:704.9px;font-size:20px;color:#000;font-weight:bold;font-family:'Liberation Serif',serif;">Zhang</div>
<div class="t" style="left:346.0px;top:776.5px;font-size:20px;color:#000;font-weight:bold;font-family:'Liberation Serif',serif;">Abstract</div>
<div class="t" style="left:425.4px;top:776.5px;font-size:20px;color:#000;font-family:'Liberation Serif',serif;word-spacing:-0.294px;">The concept of Sustainable Tourism Products (STP) derives from the dis-</div>
<div class="t" style="left:346.0px;top:800.5px;font-size:20px;color:#000;font-family:'Liberation Serif',serif;word-spacing:0.518px;">cussion of sustainable tourism. This paper takes Journal of Sustainable Tourism as</div>
<div class="t" style="left:346.0px;top:824.5px;font-size:20px;color:#000;font-family:'Liberation Serif',serif;word-spacing:1.372px;">an analyzed example and tries to provide a comprehensive bibliometric overview</div>
<div class="t" style="left:346.0px;top:848.5px;font-size:20px;color:#000;font-family:'Liberation Serif',serif;word-spacing:1.560px;">on the research of sustainable tourism products. Data of 750 articles and reviews</div>
<div class="t" style="left:346.0px;top:872.5px;font-size:20px;color:#000;font-family:'Liberation Serif',serif;word-spacing:-0.119px;">published between 2008 and 2018 in the journal are collected from Web of Science</div>
<div class="t" style="left:346.0px;top:896.5px;font-size:20px;color:#000;font-family:'Liberation Serif',serif;word-spacing:2.324px;">Core Collection, using CiteSpace for collaboration analysis, co-citation analysis,</div>
<div class="t" style="left:346.0px;top:920.5px;font-size:20px;color:#000;font-family:'Liberation Serif',serif;word-spacing:1.017px;">and the keywords co-occurrence analysis. The visualization results show that sus-</div>
<div class="t" style="left:346.0px;top:944.5px;font-size:20px;color:#000;font-family:'Liberation Serif',serif;word-spacing:0.727px;">tainable tourism products have been developed in a very diverse way. 10 forms of</div>
<div class="t" style="left:346.0px;top:968.5px;font-size:20px;color:#000;font-family:'Liberation Serif',serif;word-spacing:-0.208px;">sustainable tourism products research hotspots are identified which are ecotourism,</div>
<div class="t" style="left:346.0px;top:992.5px;font-size:20px;color:#000;font-family:'Liberation Serif',serif;word-spacing:-0.805px;">nature-based tourism, volunteer tourism, rural tourism, wildlife tourism, indigenous</div>
<div class="t" style="left:346.0px;top:1016.5px;font-size:20px;color:#000;font-family:'Liberation Serif',serif;word-spacing:-0.457px;">tourism, community-based tourism, pro-poor tourism, heritage tourism and cultural</div>
<div class="t" style="left:346.0px;top:1040.5px;font-size:20px;color:#000;font-family:'Liberation Serif',serif;word-spacing:-0.210px;">tourism. This paper also describes the evolution and emerging trends of sustainable</div>
<div class="t" style="left:346.0px;top:1064.5px;font-size:20px;color:#000;font-family:'Liberation Serif',serif;letter-spacing:-0.029px;">tourism research for practitioners.</div>
<svg class="a" style="left:0;top:0" width="1864" height="1210"><path d="M430.50 722.50 L431.00 722.69 L431.50 723.22 L432.00 724.02 L432.50 724.94 L433.00 725.84 L433.50 726.57 L434.00 727.01 L434.50 727.08 L435.00 726.78 L435.50 726.16 L436.00 725.31 L436.50 724.38 L437.00 723.52 L437.50 722.87 L438.00 722.53 L438.50 722.57 L439.00 722.97 L439.50 723.68 L440.00 724.57 L440.50 725.49 L441.00 726.31 L441.50 726.87 L442.00 727.10 L442.50 726.95 L443.00 726.44 L443.50 725.67 L444.00 724.75 L444.50 723.84 L445.00 723.09 L445.50 722.62 L446.00 722.51 L446.50 722.77 L447.00 723.37 L447.50 724.20 L448.00 725.13 L448.50 726.00 L449.00 726.68 L449.50 727.05 L450.00 727.05 L450.50 726.68 L451.00 726.00 L451.50 725.13 L452.00 724.20 L452.50 723.37 L453.00 722.77 L453.50 722.51 L454.00 722.62 L454.50 723.09 L455.00 723.84 L455.50 724.75 L456.00 725.67 L456.50 726.44 L457.00 726.95 L457.50 727.10 L458.00 726.87 L458.50 726.31 L459.00 725.49 L459.50 724.57 L460.00 723.68 L460.50 722.97 L461.00 722.57 L461.50 722.53 L462.00 722.87 L462.50 723.52 L463.00 724.38 L463.50 725.31 L464.00 726.16 L464.50 726.78 L465.00 727.08 L465.50 727.01 L466.00 726.57 L466.50 725.84 L467.00 724.94 L467.50 724.02 L468.00 723.22 L468.50 722.69 L469.00 722.50 L469.50 722.69 L470.00 723.22 L470.50 724.02 L471.00 724.94 L471.50 725.84 L472.00 726.57 L472.50 727.01 L473.00 727.08 L473.50 726.78 L474.00 726.16 L474.50 725.31 L475.00 724.38 L475.50 723.52 L476.00 722.87 L476.50 722.53 L477.00 722.57 L477.50 722.97 L478.00 723.68 L478.50 724.57 L479.00 725.49 L479.50 726.31 L480.00 726.87 L480.50 727.10 L481.00 726.95 L481.50 726.44 L482.00 725.67 L482.50 724.75 L483.00 723.84 L483.50 723.09 L484.00 722.62 L484.50 722.51 L485.00 722.77 L485.50 723.37 L486.00 724.20 L486.50 725.13 L487.00 726.00 L487.50 726.68 L488.00 727.05 L488.50 727.05 L489.00 726.68 L489.50 726.00 L490.00 725.13 L490.50 724.20 L491.00 723.37 L491.50 722.77 L492.00 722.51 L492.50 722.62 L493.00 723.09 L493.50 723.84 L494.00 724.75 L494.50 725.67 L495.00 726.44 L495.50 726.95 L496.00 727.10 L496.50 726.87 L497.00 726.31 L497.50 725.49 L498.00 724.57 L498.50 723.68 L499.00 722.97 L499.50 722.57 L500.00 722.53 L500.50 722.87 L501.00 723.52 L501.50 724.38 L502.00 725.31 L502.50 726.16 L503.00 726.78 L503.50 727.08 L504.00 727.01 L504.50 726.57 L505.00 725.84 L505.50 724.94 L506.00 724.02 L506.50 723.22 L507.00 722.69" fill="none" stroke="#d2402c" stroke-width="1.7"/></svg>
<div class="a" style="left:1264px;top:267.5px;width:600px;height:894.5px;background:#e8e8e8;"></div>
<div class="t" style="left:1300.5px;top:280.7px;font-size:30px;color:#262626;font-weight:bold;letter-spacing:-0.478px;">Styles</div>
<svg class="a" style="left:0;top:0" width="1864" height="1210"><circle cx="1834" cy="295" r="14" fill="#6b6b6b"/><path d="M1827.8 288.8 L1840.2 301.2 M1840.2 288.8 L1827.8 301.2" stroke="#fff" stroke-width="2.6"/></svg>
<div class="t" style="left:1300.5px;top:356.0px;font-size:26px;color:#262626;letter-spacing:0.572px;">Current style:</div>
<div class="a" style="left:1302px;top:406px;width:528px;height:49.5px;background:#fff;border:2px solid #9c9c9c"></div>
<div class="t" style="left:1326.0px;top:418.9px;font-size:20px;color:#000;font-weight:bold;font-family:'Liberation Serif',serif;letter-spacing:0.044px;">author</div>
<svg class="a" style="left:0;top:0" width="1864" height="1210"><path d="M1804.6 420.5 H1810.8 V422.6 H1810.6 V439.5 H1808.6 V422.6 H1806.6 V439.5 H1804.6 V432.6 A6 6 0 0 1 1804.6 420.5 Z" fill="#3d6fd0"/></svg>
<div class="a" style="left:1300px;top:482px;width:234px;height:40px;background:#fff;border-radius:8px;box-shadow:0 0.5px 1.5px rgba(0,0,0,0.25),0 0 0 0.5px rgba(0,0,0,0.06)"></div>
<div class="a" style="left:1594px;top:482px;width:234px;height:40px;background:#fff;border-radius:8px;box-shadow:0 0.5px 1.5px rgba(0,0,0,0.25),0 0 0 0.5px rgba(0,0,0,0.06)"></div>
<div class="t" style="left:1344.0px;top:488.5px;font-size:26px;color:#1d1d1d;letter-spacing:0.347px;">New Style...</div>
<div class="t" style="left:1653.0px;top:488.5px;font-size:26px;color:#1d1d1d;letter-spacing:0.618px;">Select All</div>
<div class="t" style="left:1300.5px;top:557.6px;font-size:26px;color:#262626;letter-spacing:0.531px;">Apply a style:</div>
<div class="a" style="left:1301.5px;top:603.5px;width:504px;height:349px;background:#fff;"></div>
<div class="a" style="left:1804.5px;top:603.5px;width:21px;height:349px;background:#f1f1f1;"></div>
<div class="a" style="left:1805px;top:603.5px;width:1px;height:349px;background:#e4e4e4;"></div>
<div class="a" style="left:1810.5px;top:638.5px;width:12px;height:28.5px;background:#c2c2c2;border-radius:6px"></div>
<div class="a" style="left:1310px;top:603.5px;width:486.5px;height:2px;background:#9c9c9c;"></div>
<div class="a" style="left:1310px;top:613.3px;width:486.5px;height:49px;background:#fff;border:2px solid #9c9c9c"></div>
<div class="a" style="left:1310px;top:671.7px;width:486.5px;height:49px;background:#fff;border:2px solid #9c9c9c"></div>
<div class="a" style="left:1310px;top:729.3px;width:486.5px;height:49px;background:#fff;border:2px solid #7596cf"></div>
<div class="a" style="left:1310px;top:787.7px;width:486.5px;height:49px;background:#fff;border:2px solid #9c9c9c"></div>
<div class="a" style="left:1310px;top:845.3px;width:486.5px;height:49px;background:#fff;border:2px solid #9c9c9c"></div>
<div class="a" style="left:1310px;top:903px;width:486.5px;height:50px;background:#fff;border:2px solid #9c9c9c"></div>
<div class="a" style="left:1301.5px;top:951.5px;width:504px;height:1px;background:#e8e8e8;"></div>
<div class="t" style="left:1334.0px;top:631.4px;font-size:19.5px;color:#000;font-family:'Liberation Serif',serif;letter-spacing:-0.024px;">article-number</div>
<div class="t" style="left:1668.0px;top:687.1px;font-size:19.5px;color:#000;font-family:'Liberation Serif',serif;letter-spacing:-0.131px;">articlenote</div>
<div class="t" style="left:1334.0px;top:744.4px;font-size:20px;color:#000;font-weight:bold;font-family:'Liberation Serif',serif;letter-spacing:0.144px;">author</div>
<div class="a" style="left:1335px;top:810.5px;width:7px;height:7px;border-radius:50%;background:#000"></div>
<div class="t" style="left:1356.0px;top:803.1px;font-size:19.5px;color:#000;font-family:'Liberation Serif',serif;letter-spacing:0.212px;">bulletitem</div>
<div class="t" style="left:1334.0px;top:858.3px;font-size:24px;color:#000;font-weight:bold;font-family:'Liberation Serif',serif;letter-spacing:0.095px;">Comment Subject</div>
<div class="t" style="left:1334.0px;top:918.8px;font-size:19.5px;color:#000;font-family:'Liberation Serif',serif;letter-spacing:0.161px;">CompetingInterests</div>
<div class="t" style="left:1300.5px;top:987.1px;font-size:27px;color:#262626;letter-spacing:0.121px;">List:</div>
<div class="a" style="left:1369.5px;top:977.5px;width:457px;height:45.5px;border-radius:7px;background:linear-gradient(#f0f0f0,#e6e6e6);border:1px solid #cbcbcb;box-shadow:0 0.5px 1px rgba(0,0,0,0.12)"></div>
<div class="t" style="left:1376.0px;top:990.5px;font-size:21px;color:#333;letter-spacing:0.434px;">In current document</div>
<svg class="a" style="left:0;top:0" width="1864" height="1210"><path d="M1809.5 995.5 L1815 988.5 L1820.5 995.5 Z M1809.5 1004 L1815 1011 L1820.5 1004 Z" fill="#4a4a4a"/></svg>
<div class="a" style="left:1300.5px;top:1048.2px;width:27px;height:26.6px;border-radius:5px;background:#fff;border:1px solid #cdcdcd;box-shadow:0 0.5px 1px rgba(0,0,0,0.1)"></div>
<div class="a" style="left:1300.5px;top:1092.6px;width:27px;height:26.6px;border-radius:5px;background:#fff;border:1px solid #cdcdcd;box-shadow:0 0.5px 1px rgba(0,0,0,0.1)"></div>
<div class="t" style="left:1341.0px;top:1050.5px;font-size:26px;color:#262626;letter-spacing:0.440px;">Show styles guides</div>
<div class="t" style="left:1341.0px;top:1094.2px;font-size:26px;color:#262626;letter-spacing:0.718px;">Show direct formatting guides</div>
<div class="a" style="left:6px;top:1162px;width:1857px;height:46px;background:linear-gradient(#e4e4e4,#cbcbcb);border-top:2px solid #8a8a8a;border-radius:0 0 16px 18px"></div>
<div class="a" style="left:1154px;top:1164px;width:74px;height:44px;background:linear-gradient(#9c9c9c,#9a9a9a)"></div>
<div class="t" style="left:54.0px;top:1173.5px;font-size:24px;color:#555;letter-spacing:-0.227px;">Page 1 of 1</div>
<div class="t" style="left:216.5px;top:1173.5px;font-size:24px;color:#555;letter-spacing:0.285px;">176 words</div>
<div class="t" style="left:439.0px;top:1173.5px;font-size:24px;color:#555;letter-spacing:0.548px;">English (United States)</div>
<div class="t" style="left:1066.0px;top:1173.5px;font-size:24px;color:#555;letter-spacing:0.164px;">Focus</div>
<div class="t" style="left:1752.0px;top:1173.5px;font-size:24px;color:#555;letter-spacing:0.542px;">100%</div>
<svg class="a" style="left:0;top:0" width="1864" height="1210"><g fill="none" stroke="#606060" stroke-width="2"><path d="M383 1174 C382 1173 381 1173 379 1173 H373 A2.5 2.5 0 0 0 370.5 1175.5 V1190.5 A2.5 2.5 0 0 0 373 1193 H379 C381 1193 382 1194 383 1196 C384 1194 385 1193 387 1193 H395.5 M383 1174 V1197.5 M383 1174 C384 1173 385 1173 387 1173 H395.5" stroke-width="1.9"/><path d="M389.5 1177.8 L400.5 1188.3 M400.5 1177.8 L389.5 1188.3" stroke-width="1.9"/><rect x="1023" y="1175" width="28" height="20.5" rx="2" stroke-width="2"/><path d="M1026.8 1182.3 V1178.6 H1030.8 M1043.6 1178.6 H1047.3 V1182.3 M1026.8 1187.3 V1191.3 H1030.8 M1043.6 1191.3 H1047.3 V1187.3" stroke-width="1.7" stroke-linecap="butt"/></g><rect x="1178" y="1173.5" width="26" height="23.5" rx="1.5" fill="none" stroke="#fff" stroke-width="2"/><g stroke="#fff" stroke-width="2"><path d="M1181 1177.0 H1201"/><path d="M1181 1180.6 H1201"/><path d="M1181 1184.2 H1201"/><path d="M1181 1187.8 H1201"/><path d="M1181 1191.4 H1201"/><path d="M1181 1195.0 H1201"/></g><path d="M1260 1192.5 H1248 V1173 H1270 V1181" fill="none" stroke="#5a5a5a" stroke-width="2"/><g stroke="#5a5a5a" stroke-width="2"><path d="M1251 1177.0 H1266"/><path d="M1251 1181.0 H1266"/><path d="M1251 1185.0 H1260"/><path d="M1251 1189.0 H1260"/></g><circle cx="1270" cy="1190.8" r="9.3" fill="#5a5a5a" stroke="#d6d6d6" stroke-width="1.4"/><path d="M1265 1184.5 C1267 1186 1269 1186 1268.5 1188.5 C1268 1191 1271 1193 1271.5 1197 M1272 1183.5 C1273 1186 1275.5 1186.5 1277 1188" stroke="#d6d6d6" stroke-width="1.3" fill="none"/><g stroke="#5a5a5a" stroke-width="2.2"><path d="M1320 1176.8 H1323.5 M1328 1176.8 H1342"/><path d="M1328 1183 H1331.5 M1336 1183 H1350"/><path d="M1328 1188.8 H1331.5 M1336 1188.8 H1350"/><path d="M1324 1195 H1327.5 M1332 1195 H1346"/><path d="M1392 1176.8 H1420"/><path d="M1392 1183 H1414"/><path d="M1392 1188.8 H1418"/><path d="M1392 1195 H1414"/></g><path d="M1458 1185.8 H1474" stroke="#555" stroke-width="3"/><path d="M1702 1185.8 H1718.5 M1710.2 1177.5 V1194" stroke="#555" stroke-width="3.4"/><rect x="1488" y="1182" width="199" height="8" rx="4" fill="#979797"/></svg>
<div class="a" style="left:1571.5px;top:1168.8px;width:31.8px;height:31.8px;border-radius:50%;background:#fff;box-shadow:0 0.5px 2px rgba(0,0,0,0.35)"></div>
<svg class="a" style="left:0;top:0" width="1864" height="1210"><path d="M733.7 710.5 C1037.8 729.1 1053.2 708.2 1339.6 763.9" fill="none" stroke="#e04a28" stroke-width="2.4" stroke-linecap="round"/><path d="M1299.4 415.7 C1298.6 421.4 1295.7 439.8 1294.8 449.6 C1293.9 459.4 1293.7 464.8 1294 474.4 C1294.3 484.0 1295.0 496.4 1296.4 507.4 C1297.8 518.4 1300.1 529.5 1302.2 540.5 C1304.3 551.5 1306.8 564.0 1308.8 573.6 C1310.8 583.2 1311.9 588.7 1314 598 C1316.1 607.3 1318.7 618.8 1321.4 629.3 C1324.1 639.8 1327.9 650.2 1330 660.7 C1332.1 671.2 1333.7 681.5 1334 692 C1334.3 702.5 1333.3 714.3 1331.6 723.5 C1329.9 732.7 1326.3 738.9 1323.8 747 C1321.3 755.1 1317.6 768.0 1316.4 772.2" fill="none" stroke="#e04a28" stroke-width="2.4" stroke-linecap="round"/></svg>
</body></html>
